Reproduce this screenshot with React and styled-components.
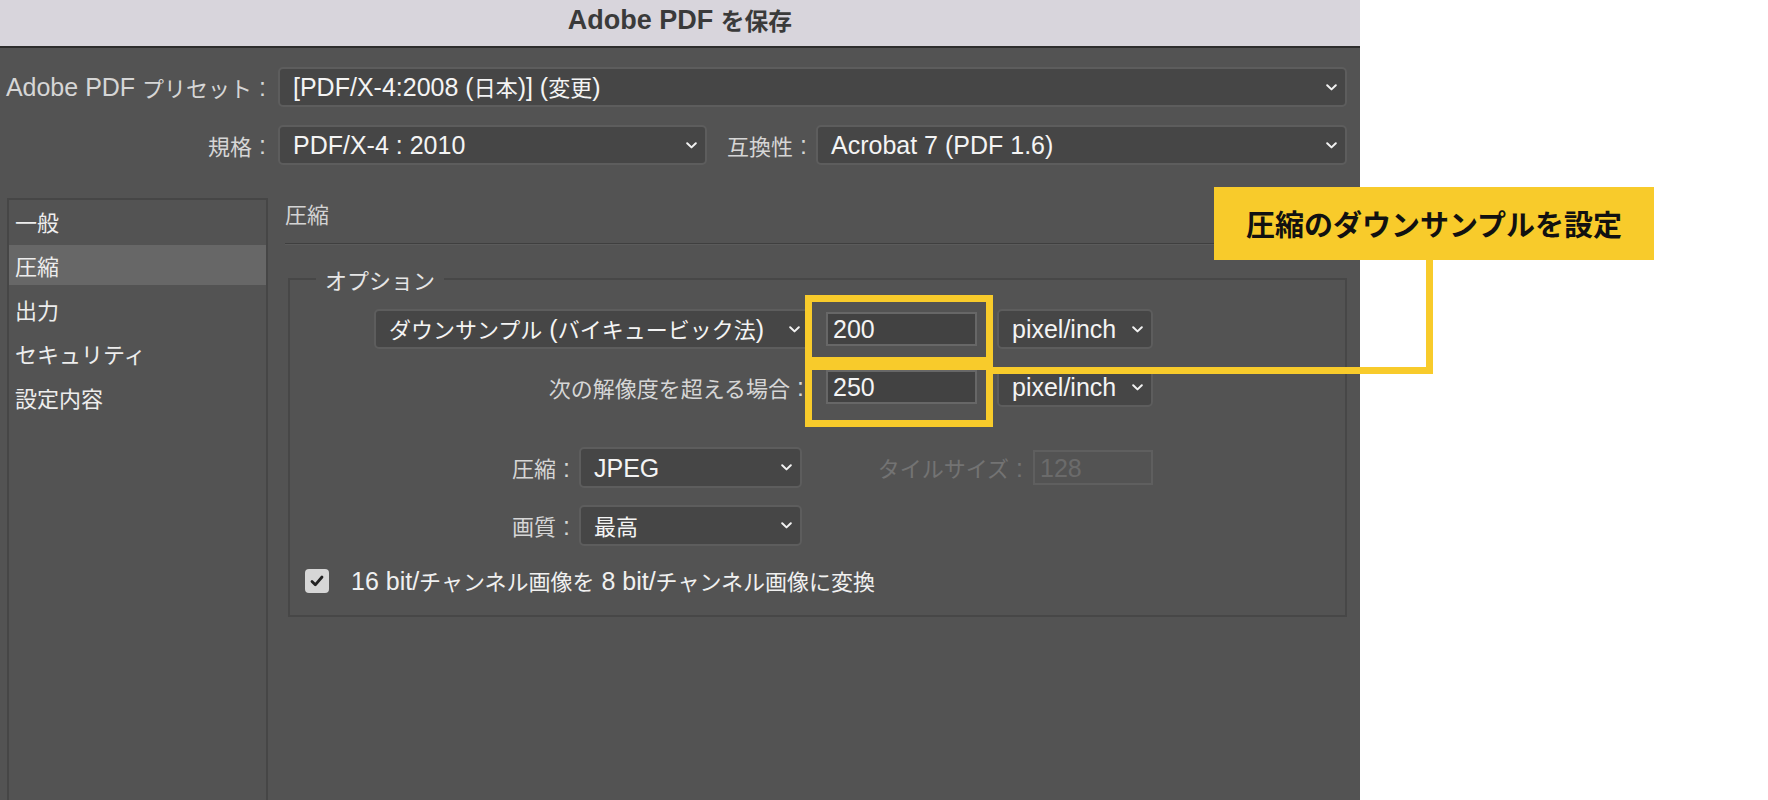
import React from 'react';
import styled, { createGlobalStyle } from 'styled-components';

const GlobalStyle = createGlobalStyle`
  html, body { margin: 0; padding: 0; background: #ffffff; }
  body {
    font-family: "Liberation Sans", "Noto Sans CJK JP", sans-serif;
    font-size: 25px;
    line-height: 1.2;
  }
  * { box-sizing: border-box; }
`;

const YELLOW = '#f8cb2b';

/* Japanese runs are set a little smaller than the Latin ones, as in the dialog's system font */
const Jp = styled.span`
  font-family: "Noto Sans CJK JP", sans-serif;
  font-size: 0.88em;
`;

const CJK_RE = /([\u3000-\u30ff\u3400-\u9fff\uff00-\uffef]+)/;

const Txt = ({ children }) => {
  const parts = String(children).split(CJK_RE);
  return parts.map((p, i) => (i % 2 ? <Jp key={i}>{p}</Jp> : <React.Fragment key={i}>{p}</React.Fragment>));
};

const Page = styled.div`
  position: relative;
  width: 1768px;
  height: 800px;
  overflow: hidden;
  background: #ffffff;
`;

const Dialog = styled.div`
  width: 1360px;
  height: 800px;
  background: #535353;
  display: flex;
  flex-direction: column;
`;

const TitleBar = styled.div`
  flex: none;
  height: 48px;
  background: #d8d5dc;
  border-bottom: 2px solid #2d2d2d;
  display: flex;
  align-items: center;
  justify-content: center;
  padding-bottom: 6px;
  font-size: 27px;
  font-weight: 700;
  color: #3a3a3a;
  white-space: pre;
`;

const TopForm = styled.div`
  flex: none;
  display: grid;
  grid-template-columns: 266px 1fr;
  column-gap: 12px;
  row-gap: 18px;
  padding: 19px 13px 0 0;
`;

const FormLabel = styled.div`
  display: flex;
  align-items: center;
  justify-content: flex-end;
  color: ${p => (p.$disabled ? '#737373' : '#d6d6d6')};
  white-space: pre;
`;

const FieldLine = styled.div`
  display: flex;
  align-items: center;
`;

const SelectBox = styled.div`
  flex: ${p => (p.$w ? 'none' : '1')};
  width: ${p => (p.$w ? p.$w + 'px' : 'auto')};
  height: ${p => p.$h || 40}px;
  margin-left: ${p => p.$ml || 0}px;
  display: flex;
  align-items: center;
  justify-content: space-between;
  padding: 0 8px 0 13px;
  background: #464646;
  border: 2px solid #5d5d5d;
  border-radius: 5px;
  color: #f4f4f4;
  white-space: pre;
`;

const Chevron = () => (
  <svg width="11" height="7" viewBox="0 0 11 7" fill="none">
    <path d="M1.2 1.2 L5.5 5.4 L9.8 1.2" stroke="#f2f2f2" strokeWidth="2" strokeLinecap="round" strokeLinejoin="round" />
  </svg>
);

const Select = ({ children, ...rest }) => (
  <SelectBox {...rest}>
    <span><Txt>{children}</Txt></span>
    <Chevron />
  </SelectBox>
);

const Body = styled.div`
  flex: 1;
  min-height: 0;
  display: flex;
  gap: 17px;
  padding: 33px 12px 0 7px;
`;

const Sidebar = styled.div`
  flex: none;
  width: 261px;
  border: 2px solid #464646;
  border-bottom: none;
  padding-top: 1px;
  display: flex;
  flex-direction: column;
  gap: 4px;
`;

const NavItem = styled.div`
  height: 40px;
  display: flex;
  align-items: center;
  padding-left: 6px;
  color: #ededed;
  background: ${p => (p.$active ? '#676767' : 'transparent')};
`;

const Panel = styled.div`
  flex: 1;
  min-width: 0;
  display: flex;
  flex-direction: column;
`;

const PanelTitle = styled.div`
  height: 30px;
  display: flex;
  align-items: center;
  color: #d4d4d4;
`;

const Separator = styled.div`
  margin-top: 15px;
  height: 2px;
  border-top: 1px solid #3f3f3f;
  border-bottom: 1px solid #5b5b5b;
`;

const Group = styled.fieldset`
  margin: 18px 1px 0 3px;
  padding: 0 0 22px 0;
  min-width: 0;
  border: 2px solid #474747;
`;

const GroupLegend = styled.legend`
  margin-left: 26px;
  padding: 0 9px;
  height: 32px;
  line-height: 32px;
  color: #e6e6e6;
`;

const GroupBody = styled.div`
  padding-top: 14px;
  display: flex;
  flex-direction: column;
`;

const Row = styled.div`
  display: flex;
  align-items: center;
  height: ${p => p.$h || 40}px;
  margin-top: ${p => p.$mt || 0}px;
  padding-left: ${p => p.$pl || 0}px;
`;

const LeadCell = styled.div`
  flex: none;
  width: ${p => p.$w}px;
  display: flex;
  justify-content: flex-end;
  align-items: center;
`;

const NumberInput = styled.div`
  flex: none;
  width: ${p => p.$w}px;
  height: ${p => p.$h || 34}px;
  margin-left: ${p => p.$ml || 0}px;
  display: flex;
  align-items: center;
  padding-left: 5px;
  background: ${p => (p.$disabled ? '#535353' : '#424242')};
  border: 2px solid ${p => (p.$disabled ? '#5f5f5f' : '#676767')};
  color: ${p => (p.$disabled ? '#6b6b6b' : '#f4f4f4')};
`;

const CheckBox = styled.div`
  flex: none;
  width: 24px;
  height: 24px;
  margin-left: 15px;
  border-radius: 4px;
  background: #d6d6d6;
  display: flex;
  align-items: center;
  justify-content: center;
`;

const CheckText = styled.span`
  margin-left: 22px;
  color: #f0f0f0;
  white-space: pre;
`;

const HighlightBox = styled.div`
  position: absolute;
  left: ${p => p.$x}px;
  top: ${p => p.$y}px;
  width: ${p => p.$w}px;
  height: ${p => p.$h}px;
  border: 7px solid ${YELLOW};
`;

const Bar = styled.div`
  position: absolute;
  left: ${p => p.$x}px;
  top: ${p => p.$y}px;
  width: ${p => p.$w}px;
  height: ${p => p.$h}px;
  background: ${YELLOW};
`;

const Callout = styled.div`
  position: absolute;
  left: 1214px;
  top: 187px;
  width: 440px;
  height: 73px;
  background: ${YELLOW};
  display: flex;
  align-items: center;
  justify-content: center;
  font-family: "Noto Sans CJK JP", sans-serif;
  font-size: 29px;
  font-weight: 700;
  color: #111111;
  white-space: nowrap;
`;

export default function App() {
  return (
    <Page>
      <GlobalStyle />
      <Dialog>
        <TitleBar><Txt>Adobe PDF を保存</Txt></TitleBar>
        <TopForm>
          <FormLabel><Txt>Adobe PDF プリセット :</Txt></FormLabel>
          <Select>[PDF/X-4:2008 (日本)] (変更)</Select>
          <FormLabel><Txt>規格 :</Txt></FormLabel>
          <FieldLine>
            <Select $w={429}>PDF/X-4 : 2010</Select>
            <LeadCell $w={100}>
              <FormLabel><Txt>互換性 :</Txt></FormLabel>
            </LeadCell>
            <Select $ml={9}>Acrobat 7 (PDF 1.6)</Select>
          </FieldLine>
        </TopForm>
        <Body>
          <Sidebar>
            <NavItem><Txt>一般</Txt></NavItem>
            <NavItem $active><Txt>圧縮</Txt></NavItem>
            <NavItem><Txt>出力</Txt></NavItem>
            <NavItem><Txt>セキュリティ</Txt></NavItem>
            <NavItem><Txt>設定内容</Txt></NavItem>
          </Sidebar>
          <Panel>
            <PanelTitle><Txt>圧縮</Txt></PanelTitle>
            <Separator />
            <Group>
              <GroupLegend><Txt>オプション</Txt></GroupLegend>
              <GroupBody>
                <Row $pl={84}>
                  <LeadCell $w={436}>
                    <Select $w={436}>ダウンサンプル (バイキュービック法)</Select>
                  </LeadCell>
                  <NumberInput $w={151} $ml={16}>200</NumberInput>
                  <Select $w={156} $ml={20}>pixel/inch</Select>
                </Row>
                <Row $pl={84} $mt={18}>
                  <LeadCell $w={430}>
                    <FormLabel><Txt>次の解像度を超える場合 :</Txt></FormLabel>
                  </LeadCell>
                  <NumberInput $w={151} $ml={22}>250</NumberInput>
                  <Select $w={156} $ml={20}>pixel/inch</Select>
                </Row>
                <Row $pl={84} $mt={40} $h={41}>
                  <LeadCell $w={196}>
                    <FormLabel><Txt>圧縮 :</Txt></FormLabel>
                  </LeadCell>
                  <Select $w={223} $ml={9} $h={41}>JPEG</Select>
                  <LeadCell $w={221}>
                    <FormLabel $disabled><Txt>タイルサイズ :</Txt></FormLabel>
                  </LeadCell>
                  <NumberInput $disabled $w={120} $h={35} $ml={10}>128</NumberInput>
                </Row>
                <Row $pl={84} $mt={17} $h={41}>
                  <LeadCell $w={196}>
                    <FormLabel><Txt>画質 :</Txt></FormLabel>
                  </LeadCell>
                  <Select $w={223} $ml={9} $h={41}>最高</Select>
                </Row>
                <Row $mt={23} $h={24}>
                  <CheckBox>
                    <svg width="14" height="12" viewBox="0 0 14 12" fill="none">
                      <path d="M2 6.5 L5.3 9.8 L12 2" stroke="#222222" strokeWidth="2.8" strokeLinecap="round" strokeLinejoin="round" />
                    </svg>
                  </CheckBox>
                  <CheckText><Txt>16 bit/チャンネル画像を 8 bit/チャンネル画像に変換</Txt></CheckText>
                </Row>
              </GroupBody>
            </Group>
          </Panel>
        </Body>
      </Dialog>
      <HighlightBox $x={805} $y={295} $w={188} $h={69} />
      <HighlightBox $x={805} $y={363} $w={188} $h={64} />
      <Bar $x={993} $y={367} $w={440} $h={7} />
      <Bar $x={1426} $y={259} $w={7} $h={115} />
      <Callout>圧縮のダウンサンプルを設定</Callout>
    </Page>
  );
}
